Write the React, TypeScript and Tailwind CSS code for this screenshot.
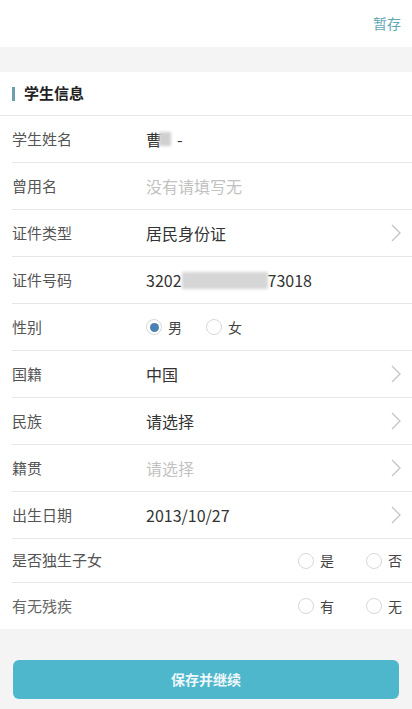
type Row = {
  label: string
  value?: React.ReactNode
  placeholder?: boolean
  arrow?: boolean
}

function Chevron() {
  return (
    <svg width="10" height="18" viewBox="0 0 10 18" fill="none">
      <polyline points="1,1 9,9 1,17" stroke="#c4c4c4" strokeWidth="1.3" />
    </svg>
  )
}

function Radio({ checked, label }: { checked?: boolean; label: string }) {
  return (
    <div className="flex items-center gap-[6px]">
      <span className="w-[16px] h-[16px] rounded-full border border-[#d8d8d8] flex items-center justify-center bg-white">
        {checked && <span className="w-[9px] h-[9px] rounded-full bg-[#4a80b2]" />}
      </span>
      <span className="text-[14px] text-[#444]">{label}</span>
    </div>
  )
}

const rows: Row[] = [
  {
    label: "学生姓名",
    value: (
      <span className="flex items-center">
        曹
        <span className="inline-block w-[12px] h-[14px] bg-[#d0d0d0] blur-[1.5px] ml-[-3px]" />
        <span className="ml-[6px]">-</span>
      </span>
    ),
  },
  { label: "曾用名", value: "没有请填写无", placeholder: true },
  { label: "证件类型", value: "居民身份证", arrow: true },
  {
    label: "证件号码",
    value: (
      <span className="flex items-center">
        3202
        <span className="inline-block w-[86px] h-[17px] bg-[#d6d6d6] blur-[1.5px]" />
        73018
      </span>
    ),
  },
]

const rows2: Row[] = [
  { label: "国籍", value: "中国", arrow: true },
  { label: "民族", value: "请选择", arrow: true },
  { label: "籍贯", value: "请选择", placeholder: true, arrow: true },
  { label: "出生日期", value: "2013/10/27", arrow: true },
]

function FormRow({ label, value, placeholder, arrow }: Row) {
  return (
    <div className="h-[47px] flex items-center border-b border-[#e6e6e6] pr-[11px]">
      <div className="w-[134px] text-[15px] text-[#555]">{label}</div>
      <div className={`flex-1 text-[16px] ${placeholder ? "text-[#c2c2c2]" : "text-[#333]"}`}>{value}</div>
      {arrow && <Chevron />}
    </div>
  )
}

export default function App() {
  return (
    <div className="w-[412px] h-[709px] bg-[#f4f4f4] flex flex-col" style={{ fontFamily: '"Noto Sans CJK SC", "Noto Sans", sans-serif' }}>
      {/* top bar */}
      <div className="h-[47px] bg-white flex items-center justify-end pr-[11px]">
        <span className="text-[14px] text-[#5fa7b2]">暂存</span>
      </div>

      <div className="h-[25px]" />

      {/* card */}
      <div className="bg-white">
        <div className="h-[44px] flex items-center pl-[12px] border-b border-[#e6e6e6]">
          <span className="w-[3px] h-[14px] bg-[#6b9fb0] mr-[9px]" />
          <span className="text-[15px] font-bold text-[#222]">学生信息</span>
        </div>
        <div className="pl-[12px]">
          {rows.map((r) => (
            <FormRow key={r.label} {...r} />
          ))}
          <div className="h-[47px] flex items-center border-b border-[#e6e6e6]">
            <div className="w-[134px] text-[15px] text-[#555]">性别</div>
            <div className="flex items-center gap-[24px]">
              <Radio checked label="男" />
              <Radio label="女" />
            </div>
          </div>
          {rows2.map((r) => (
            <FormRow key={r.label} {...r} />
          ))}
          <div className="h-[44px] flex items-center border-b border-[#e6e6e6] pr-[10px]">
            <div className="flex-1 text-[15px] text-[#555]">是否独生子女</div>
            <div className="flex items-center gap-[32px]">
              <Radio label="是" />
              <Radio label="否" />
            </div>
          </div>
          <div className="h-[46px] flex items-center pr-[10px]">
            <div className="flex-1 text-[15px] text-[#666]">有无残疾</div>
            <div className="flex items-center gap-[32px]">
              <Radio label="有" />
              <Radio label="无" />
            </div>
          </div>
        </div>
      </div>

      {/* bottom button */}
      <div className="px-[13px] pt-[31px]">
        <button className="w-full h-[39px] rounded-[6px] bg-[#4fb7cc] text-[#eef8fa] text-[14px] font-semibold">
          保存并继续
        </button>
      </div>
    </div>
  )
}
